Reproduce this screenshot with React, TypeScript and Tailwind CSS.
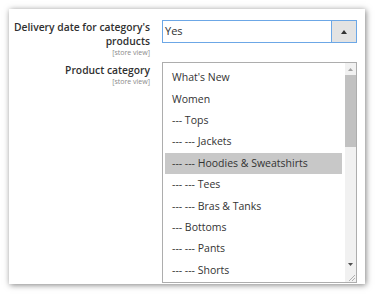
import React from "react";

const items = [
  "What's New",
  "Women",
  "--- Tops",
  "--- --- Jackets",
  "--- --- Hoodies & Sweatshirts",
  "--- --- Tees",
  "--- --- Bras & Tanks",
  "--- Bottoms",
  "--- --- Pants",
  "--- --- Shorts",
];

export default function App() {
  return (
    <div
      className="w-[376px] h-[300px] bg-white pl-[9px] pt-[9px] overflow-hidden"
      style={{ fontFamily: '"Open Sans", "Noto Sans", sans-serif' }}
    >
      <div className="w-[356px] h-[275px] bg-white shadow-[1px_1px_6px_rgba(0,0,0,0.5)] pt-[11px] flex flex-col gap-[19px]">
        {/* Row 1 */}
        <div className="flex h-[23px]">
          <div className="w-[141px] flex flex-col items-end text-right mt-[1px]">
            <div className="text-[10.3px] leading-[13.5px] font-semibold text-[#303030] whitespace-nowrap">
              Delivery date for category's
              <br />
              products
            </div>
            <div className="text-[7px] leading-[9px] text-[#8a8a8a]">[store view]</div>
          </div>
          <div className="ml-[12px] w-[195px] h-[23px] border border-[#6ca7e6] flex">
            <div className="flex-1 flex items-center pl-[2px] text-[11px] text-[#303030]">Yes</div>
            <div className="w-[25px] bg-[#e3e3e3] border-l border-[#6ca7e6] flex items-center justify-center">
              <svg width="6" height="4" viewBox="0 0 6 4">
                <polygon points="0,4 6,4 3,0" fill="#333" />
              </svg>
            </div>
          </div>
        </div>
        {/* Row 2 */}
        <div className="flex">
          <div className="w-[141px] flex flex-col items-end text-right mt-[1.5px]">
            <div className="text-[10.3px] leading-[13.5px] font-semibold text-[#303030] whitespace-nowrap">
              Product category
            </div>
            <div className="text-[7px] leading-[10px] text-[#8a8a8a]">[store view]</div>
          </div>
          <div className="ml-[12px] w-[195px] h-[221px] border border-[#adadad] flex">
            <div className="flex-1 pt-[4px] pl-[2px] pr-[3px]">
              {items.map((it, i) => (
                <div
                  key={i}
                  className={`h-[21.4px] flex items-center pl-[7px] pt-[1px] text-[10.5px] text-[#333] whitespace-nowrap ${
                    i === 4 ? "bg-[#c8c8c8]" : ""
                  }`}
                >
                  {it}
                </div>
              ))}
            </div>
            <div className="w-[11px] bg-[#f1f1f1] flex flex-col">
              <div className="h-[12px] flex items-center justify-center">
                <svg width="5" height="3" viewBox="0 0 5 3">
                  <polygon points="0,3 5,3 2.5,0" fill="#a3a3a3" />
                </svg>
              </div>
              <div className="h-[72px] bg-[#c1c1c1]" />
              <div className="flex-1" />
              <div className="h-[12px] flex items-center justify-center">
                <svg width="5" height="3" viewBox="0 0 5 3">
                  <polygon points="0,0 5,0 2.5,3" fill="#505050" />
                </svg>
              </div>
              <div className="h-[12px] flex items-end justify-end pr-[1px] pb-[1px]">
                <svg width="7" height="7" viewBox="0 0 7 7">
                  <line x1="1" y1="7" x2="7" y2="1" stroke="#a0a0a0" strokeWidth="0.8" />
                  <line x1="4" y1="7" x2="7" y2="4" stroke="#a0a0a0" strokeWidth="0.8" />
                </svg>
              </div>
            </div>
          </div>
        </div>
      </div>
    </div>
  );
}
